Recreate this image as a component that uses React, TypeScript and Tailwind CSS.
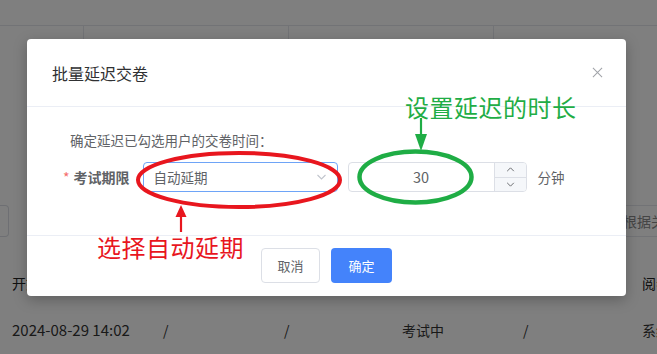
import React from "react";

const cols = [151, 121, 118, 121, 119, 80];

function Chevron({ dir, className }: { dir: "up" | "down"; className?: string }) {
  return (
    <svg viewBox="0 0 10 6" className={className} fill="none" stroke="currentColor" strokeWidth="1.1">
      {dir === "down" ? <path d="M1 1 L5 5 L9 1" /> : <path d="M1 5 L5 1 L9 5" />}
    </svg>
  );
}

export default function App() {
  return (
    <div className="relative h-[354px] w-[657px] overflow-hidden bg-white font-['Noto_Sans_CJK_SC','Liberation_Sans',sans-serif] text-[#333]">
      {/* underlying page */}
      <div className="h-[26px] border-b border-[#e4e7ed]" />
      <div className="flex h-[40px]">
        <div className="w-[84px] border-r border-[#e4e7ed]" />
        <div className="w-[205px] border-r border-[#e4e7ed]" />
        <div className="w-[205px] border-r border-[#e4e7ed]" />
        <div className="flex-1" />
      </div>
      <div className="mt-[139px] flex h-[32px] items-stretch">
        <div className="w-[9px] rounded-r-[4px] border border-l-0 border-[#dcdfe6]" />
        <div className="flex-1" />
        <div className="flex w-[40px] shrink-0 items-center overflow-hidden whitespace-nowrap border-y border-[#e4e7ed] pl-[6px] text-[14px] text-[#8a8a8a]">
          根据关键字搜索
        </div>
      </div>
      <div className="mt-[24px] flex h-[44px] items-center pl-[12px] text-[14px] text-[#222]">
        {["开始时间", "结束时间", "交卷时间", "状态", "延迟时间", "阅卷方式"].map((t, i) => (
          <div key={i} style={{ width: cols[i] }} className="shrink-0 whitespace-nowrap">
            {t}
          </div>
        ))}
      </div>
      <div className="mt-[10px] flex h-[30px] items-center pl-[12px] text-[14px] text-[#333]">
        {["2024-08-29 14:02", "/", "/", "考试中", "/", "系统阅卷"].map((t, i) => (
          <div key={i} style={{ width: cols[i] }} className={i === 0 ? "shrink-0 whitespace-nowrap text-[15px]" : "shrink-0 whitespace-nowrap"}>
            {t}
          </div>
        ))}
      </div>

      {/* mask */}
      <div className="absolute inset-0 bg-black/50" />

      {/* dialog */}
      <div className="absolute left-[27px] top-[39px] w-[599px] rounded-[4px] bg-white shadow-[0_4px_14px_rgba(0,0,0,0.25)]">
        <div className="flex h-[67px] items-center justify-between pl-[25px] pr-[23px]">
          <span className="text-[16px] text-[#303133]">批量延迟交卷</span>
          <svg viewBox="0 0 12 12" className="h-[11px] w-[11px] text-[#a0a3a8]" stroke="currentColor" strokeWidth="1.1">
            <path d="M1 1 L11 11 M11 1 L1 11" />
          </svg>
        </div>
        <div className="h-[130px] border-y border-[#ebeef5] pt-[24px]">
          <div className="pl-[43px] text-[13.5px] leading-[18px] text-[#606266]">确定延迟已勾选用户的交卷时间：</div>
          <div className="mt-[13px] flex h-[30px] items-center pl-[36px]">
            <span className="mr-[4px] text-[14px] text-[#f56c6c]">*</span>
            <span className="mr-[13px] text-[14px] font-semibold text-[#606266]">考试期限</span>
            <div className="flex h-[30px] w-[195px] items-center justify-between rounded-[4px] border border-[#6ea4f7] pl-[10px] pr-[10px]">
              <span className="text-[13.5px] text-[#606266]">自动延期</span>
              <Chevron dir="down" className="h-[6px] w-[11px] text-[#c0c4cc]" />
            </div>
            <div className="ml-[10px] flex h-[30px] w-[179px] overflow-hidden rounded-[4px] border border-[#dcdfe6]">
              <div className="flex flex-1 items-center justify-center text-[14.5px] text-[#606266]">30</div>
              <div className="flex w-[32px] flex-col border-l border-[#dcdfe6] bg-[#f5f7fa]">
                <div className="flex flex-1 items-center justify-center border-b border-[#dcdfe6]">
                  <Chevron dir="up" className="h-[5px] w-[9px] text-[#606266]" />
                </div>
                <div className="flex flex-1 items-center justify-center">
                  <Chevron dir="down" className="h-[5px] w-[9px] text-[#606266]" />
                </div>
              </div>
            </div>
            <span className="ml-[11px] text-[13.5px] text-[#606266]">分钟</span>
          </div>
        </div>
        <div className="flex justify-center gap-[11px] pb-[13px] pt-[12px]">
          <button className="h-[35px] w-[59px] rounded-[4px] border border-[#dcdfe6] bg-white text-[13px] text-[#606266]">
            取消
          </button>
          <button className="h-[35px] w-[61px] rounded-[4px] bg-[#4483fb] text-[13px] text-white">确定</button>
        </div>
      </div>

      {/* annotations */}
      <svg className="pointer-events-none absolute inset-0 h-[354px] w-[657px]" viewBox="0 0 657 354">
        <ellipse cx="239" cy="180" rx="101" ry="27" fill="none" stroke="#e8161e" strokeWidth="4" />
        <line x1="181" y1="232" x2="181" y2="214" stroke="#e8161e" strokeWidth="2.2" />
        <polygon points="175.5,217 186.5,217 181,205" fill="#e8161e" />
        <ellipse cx="415.5" cy="177" rx="56" ry="25.5" fill="none" stroke="#1fad45" strokeWidth="4.5" />
        <line x1="421" y1="118" x2="421" y2="138" stroke="#1fad45" strokeWidth="2.2" />
        <polygon points="415,134 427,134 421,151" fill="#1fad45" />
      </svg>
      <div className="absolute left-[97px] top-[233px] whitespace-nowrap text-[24px] leading-[28px] tracking-[0.5px] text-[#e8161e]">
        选择自动延期
      </div>
      <div className="absolute left-[405px] top-[93px] whitespace-nowrap text-[24px] leading-[28px] tracking-[0.5px] text-[#1fad45]">
        设置延迟的时长
      </div>
    </div>
  );
}
